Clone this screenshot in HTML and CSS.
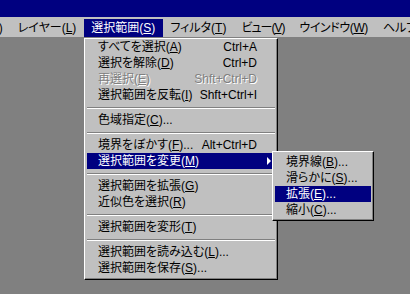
FILE: index.html
```html
<!DOCTYPE html>
<html lang="ja">
<head>
<meta charset="utf-8">
<title>選択範囲</title>
<link rel="stylesheet" href="styles.css">
</head>
<body>
<div class="screen">
  <div class="titlebar"></div>
  <div class="menubar">
    <span class="mi mi-clip">イメージ(<u>I</u>)</span>
    <span class="mi">レイヤー(<u>L</u>)</span>
    <span class="mi active">選択範囲(<u>S</u>)</span>
    <span class="mi">フィルタ(<u>T</u>)</span>
    <span class="mi mi-tight">ビュー(<u>V</u>)</span>
    <span class="mi mi-snug">ウインドウ(<u>W</u>)</span>
    <span class="mi">ヘルプ(<u>H</u>)</span>
  </div>
  <div class="workspace">
    <div class="menu main-menu">
      <div class="row"><span class="label">すべてを選択(<u>A</u>)</span><span class="key">Ctrl+A</span></div>
      <div class="row"><span class="label">選択を解除(<u>D</u>)</span><span class="key">Ctrl+D</span></div>
      <div class="row disabled"><span class="label">再選択(<u>E</u>)</span><span class="key">Shft+Ctrl+D</span></div>
      <div class="row"><span class="label">選択範囲を反転(<u>I</u>)</span><span class="key">Shft+Ctrl+I</span></div>
      <div class="sep"></div>
      <div class="row"><span class="label">色域指定(<u>C</u>)...</span></div>
      <div class="sep"></div>
      <div class="row"><span class="label">境界をぼかす(<u>F</u>)...</span><span class="key">Alt+Ctrl+D</span></div>
      <div class="row hl"><span class="label">選択範囲を変更(<u>M</u>)</span><span class="arrow"></span></div>
      <div class="sep"></div>
      <div class="row"><span class="label">選択範囲を拡張(<u>G</u>)</span></div>
      <div class="row"><span class="label">近似色を選択(<u>R</u>)</span></div>
      <div class="sep"></div>
      <div class="row"><span class="label">選択範囲を変形(<u>T</u>)</span></div>
      <div class="sep"></div>
      <div class="row"><span class="label">選択範囲を読み込む(<u>L</u>)...</span></div>
      <div class="row"><span class="label">選択範囲を保存(<u>S</u>)...</span></div>
    </div>
    <div class="menu sub-menu">
      <div class="row"><span class="label">境界線(<u>B</u>)...</span></div>
      <div class="row"><span class="label">滑らかに(<u>S</u>)...</span></div>
      <div class="row hl"><span class="label">拡張(<u>E</u>)...</span></div>
      <div class="row"><span class="label">縮小(<u>C</u>)...</span></div>
    </div>
  </div>
</div>
</body>
</html>
```
FILE: styles.css
```css
html, body {
  margin: 0;
  padding: 0;
  background: #808080;
}
.screen {
  width: 410px;
  height: 294px;
  display: flex;
  flex-direction: column;
  overflow: hidden;
  font-family: "Liberation Sans", "Noto Sans CJK JP", sans-serif;
  font-size: 12px;
  font-feature-settings: "palt" 1;
  color: #000;
}
.titlebar {
  height: 17px;
  background: #000080;
  flex: none;
}
.menubar {
  height: 20px;
  background: #c0c0c0;
  display: flex;
  align-items: flex-end;
  white-space: nowrap;
  overflow: hidden;
  flex: none;
}
.mi {
  height: 18px;
  line-height: 18px;
  padding: 0 8px 0 7px;
  flex: none;
}
.mi-clip {
  margin-left: -60px;
}
.mi-tight {
  letter-spacing: -1px;
}
.mi-snug {
  letter-spacing: -0.4px;
}
.mi.active {
  background: #000080;
  color: #fff;
}
u {
  text-decoration: underline;
  text-underline-offset: 1px;
}
.workspace {
  flex: 1;
  position: relative;
  background: #808080;
}
.menu {
  position: absolute;
  background: #c0c0c0;
  border: 1px solid;
  border-color: #fff #000 #000 #fff;
  box-shadow: inset -1px -1px 0 #808080;
  white-space: nowrap;
}
.main-menu {
  left: 84px;
  top: 1px;
  width: 188px;
  padding: 0 2px 3px 2px;
}
.sub-menu {
  left: 272px;
  top: 114px;
  width: 96px;
  padding: 2px 2px 2px 2px;
}
.row {
  position: relative;
  height: 16px;
  line-height: 16px;
  display: flex;
  justify-content: space-between;
  padding: 0 18px 0 11px;
}
.row.hl {
  background: #000080;
  color: #fff;
}
.row.disabled {
  color: #808080;
  text-shadow: 1px 1px 0 #fff;
}
.key {
  text-align: right;
}
.arrow {
  position: absolute;
  right: 4px;
  top: 4px;
  width: 0;
  height: 0;
  border-left: 4px solid #fff;
  border-top: 4px solid transparent;
  border-bottom: 4px solid transparent;
}
.sep {
  height: 9px;
  display: flex;
  flex-direction: column;
  justify-content: center;
}
.sep::before {
  content: "";
  display: block;
  height: 1px;
  background: #808080;
  border-bottom: 1px solid #fff;
}
```
